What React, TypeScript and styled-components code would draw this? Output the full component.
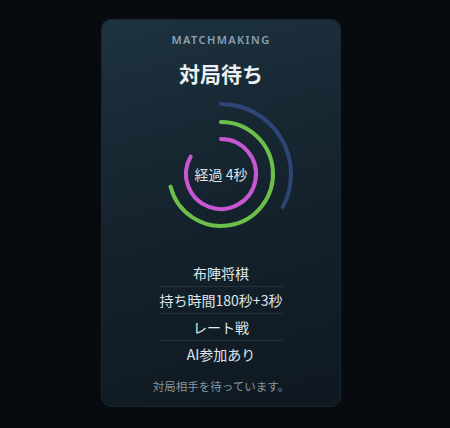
import React from "react";
import styled, { createGlobalStyle } from "styled-components";

const GlobalStyle = createGlobalStyle`
  html, body {
    margin: 0;
    padding: 0;
    background: #070a0f;
  }
  body {
    font-family: "Noto Sans", "Noto Sans CJK JP", sans-serif;
  }
`;

const rings = [
  { r: 70, color: "#2e4677", sweep: 118 },
  { r: 52, color: "#6cc04a", sweep: 256 },
  { r: 35, color: "#c957d3", sweep: 300 },
];

const rules = ["布陣将棋", "持ち時間180秒+3秒", "レート戦", "AI参加あり"];

function arcPath(r: number, sweep: number) {
  const cx = 75;
  const cy = 75;
  const a = ((sweep - 90) * Math.PI) / 180;
  const x = cx + r * Math.cos(a);
  const y = cy + r * Math.sin(a);
  const large = sweep > 180 ? 1 : 0;
  return `M ${cx} ${cy - r} A ${r} ${r} 0 ${large} 1 ${x.toFixed(2)} ${y.toFixed(2)}`;
}

function App() {
  return (
    <Page>
      <GlobalStyle />
      <Card>
        <Eyebrow>MATCHMAKING</Eyebrow>
        <Title>対局待ち</Title>
        <RingBox>
          <svg width="150" height="150" viewBox="0 0 150 150">
            {rings.map((ring) => (
              <path
                key={ring.r}
                d={arcPath(ring.r, ring.sweep)}
                fill="none"
                stroke={ring.color}
                strokeWidth="4"
                strokeLinecap="round"
              />
            ))}
          </svg>
          <Elapsed>経過 4秒</Elapsed>
        </RingBox>
        <RuleList>
          {rules.map((rule, i) => (
            <RuleRow key={rule} last={i === rules.length - 1}>
              {rule}
            </RuleRow>
          ))}
        </RuleList>
        <Footer>対局相手を待っています。</Footer>
      </Card>
    </Page>
  );
}

const Page = styled.div`
  width: 450px;
  height: 428px;
  display: flex;
  justify-content: center;
  padding-top: 19px;
  box-sizing: border-box;
`;

const Card = styled.div`
  width: 240px;
  height: 388px;
  margin-left: -8px;
  box-sizing: border-box;
  border-radius: 10px;
  border: 1px solid #19272f;
  background: linear-gradient(165deg, #1d323f 0%, #14222c 50%, #0f1820 100%);
  display: flex;
  flex-direction: column;
  align-items: center;
  padding: 13px 0 0;
`;

const Eyebrow = styled.div`
  font-size: 11px;
  line-height: 14px;
  font-weight: 600;
  letter-spacing: 1.4px;
  color: #8ca1b1;
`;

const Title = styled.div`
  margin-top: 13px;
  font-size: 21px;
  line-height: 28px;
  font-weight: 700;
  color: #eaf0f3;
`;

const RingBox = styled.div`
  position: relative;
  width: 150px;
  height: 150px;
  margin-top: 11px;
  svg {
    display: block;
  }
`;

const Elapsed = styled.div`
  position: absolute;
  inset: 0;
  display: flex;
  align-items: center;
  justify-content: center;
  font-family: "Noto Sans CJK JP", sans-serif;
  font-size: 14px;
  color: #dbe4ea;
`;

const RuleList = styled.div`
  margin-top: 11px;
  width: 124px;
  display: flex;
  flex-direction: column;
`;

const RuleRow = styled.div<{ last?: boolean }>`
  height: 26px;
  display: flex;
  align-items: center;
  justify-content: center;
  font-family: "Noto Sans CJK JP", sans-serif;
  font-size: 14px;
  color: #dfe7ec;
  white-space: nowrap;
  border-bottom: ${({ last }) => (last ? "none" : "1px solid #24323b")};
`;

const Footer = styled.div`
  margin-top: 11px;
  font-size: 11.5px;
  line-height: 18px;
  color: #8796a2;
`;

export default App;
